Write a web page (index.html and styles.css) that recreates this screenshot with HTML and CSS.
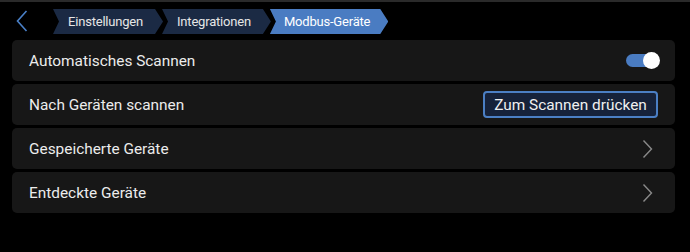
FILE: index.html
```html
<!DOCTYPE html>
<html lang="de">
<head>
<meta charset="utf-8">
<link rel="stylesheet" href="styles.css">
</head>
<body>
<div class="page">
  <header class="topbar">
    <button class="back" aria-label="Zurück">
      <svg width="12" height="22" viewBox="0 0 12 22"><polyline points="10.5,1 1.5,11 10.5,21" fill="none" stroke="#4a80c8" stroke-width="1.6"/></svg>
    </button>
    <nav class="crumbs">
      <span class="crumb">Einstellungen</span>
      <span class="crumb">Integrationen</span>
      <span class="crumb active">Modbus-Geräte</span>
    </nav>
  </header>
  <main class="list">
    <div class="row">
      <span class="label">Automatisches Scannen</span>
      <span class="toggle"><span class="knob"></span></span>
    </div>
    <div class="row">
      <span class="label">Nach Geräten scannen</span>
      <button class="scan">Zum Scannen drücken</button>
    </div>
    <div class="row">
      <span class="label">Gespeicherte Geräte</span>
      <svg class="chev" width="11" height="20" viewBox="0 0 11 20"><polyline points="1.5,1.5 9.5,10 1.5,18.5" fill="none" stroke="#8a8a8a" stroke-width="1.4"/></svg>
    </div>
    <div class="row">
      <span class="label">Entdeckte Geräte</span>
      <svg class="chev" width="11" height="20" viewBox="0 0 11 20"><polyline points="1.5,1.5 9.5,10 1.5,18.5" fill="none" stroke="#8a8a8a" stroke-width="1.4"/></svg>
    </div>
  </main>
</div>
</body>
</html>
```
FILE: styles.css
```css
html, body {
  margin: 0;
  padding: 0;
  background: #000;
}
body {
  font-family: Roboto, "Liberation Sans", sans-serif;
  color: #ececec;
  border-top: 2px solid #2a2a2a;
  height: 250px;
  overflow: hidden;
}
.page {
  padding: 0 15px 0 12px;
}
.topbar {
  display: flex;
  align-items: center;
  height: 38px;
}
.back {
  background: none;
  border: none;
  padding: 0;
  margin: 0 0 0 4px;
  width: 12px;
  height: 22px;
  display: flex;
}
.crumbs {
  display: flex;
  margin-left: 25px;
  margin-top: 1px;
}
.crumb {
  display: flex;
  align-items: center;
  height: 25px;
  padding: 0 20px 0 15px;
  background: #1b2a44;
  color: #e6e6e6;
  font-size: 13px;
  letter-spacing: -0.2px;
  clip-path: polygon(0 0, calc(100% - 8px) 0, 100% 50%, calc(100% - 8px) 100%, 0 100%, 6px 50%);
  margin-right: -1px;
}
.crumb.active {
  background: #4a7cc2;
  color: #fff;
  padding: 0 18px 0 14px;
}
.list {
  display: flex;
  flex-direction: column;
  gap: 3px;
}
.row {
  display: flex;
  align-items: center;
  justify-content: space-between;
  height: 41px;
  padding: 0 16px 0 17px;
  background: #171717;
  border-radius: 5px;
}
.label {
  font-size: 15.4px;
}
.toggle {
  position: relative;
  width: 28px;
  height: 13px;
  border-radius: 7px;
  background: #4a7cc2;
  margin-right: 5px;
}
.knob {
  position: absolute;
  right: -6px;
  top: -2px;
  width: 17px;
  height: 17px;
  border-radius: 50%;
  background: #fff;
}
.scan {
  font-family: Roboto, "Liberation Sans", sans-serif;
  font-size: 15.4px;
  color: #f0f0f0;
  background: #16223a;
  border: 2px solid #4b7fc4;
  border-radius: 4px;
  height: 27px;
  width: 175px;
  padding: 0;
  margin-right: 1px;
}
.chev {
  margin-right: 6px;
}
```
